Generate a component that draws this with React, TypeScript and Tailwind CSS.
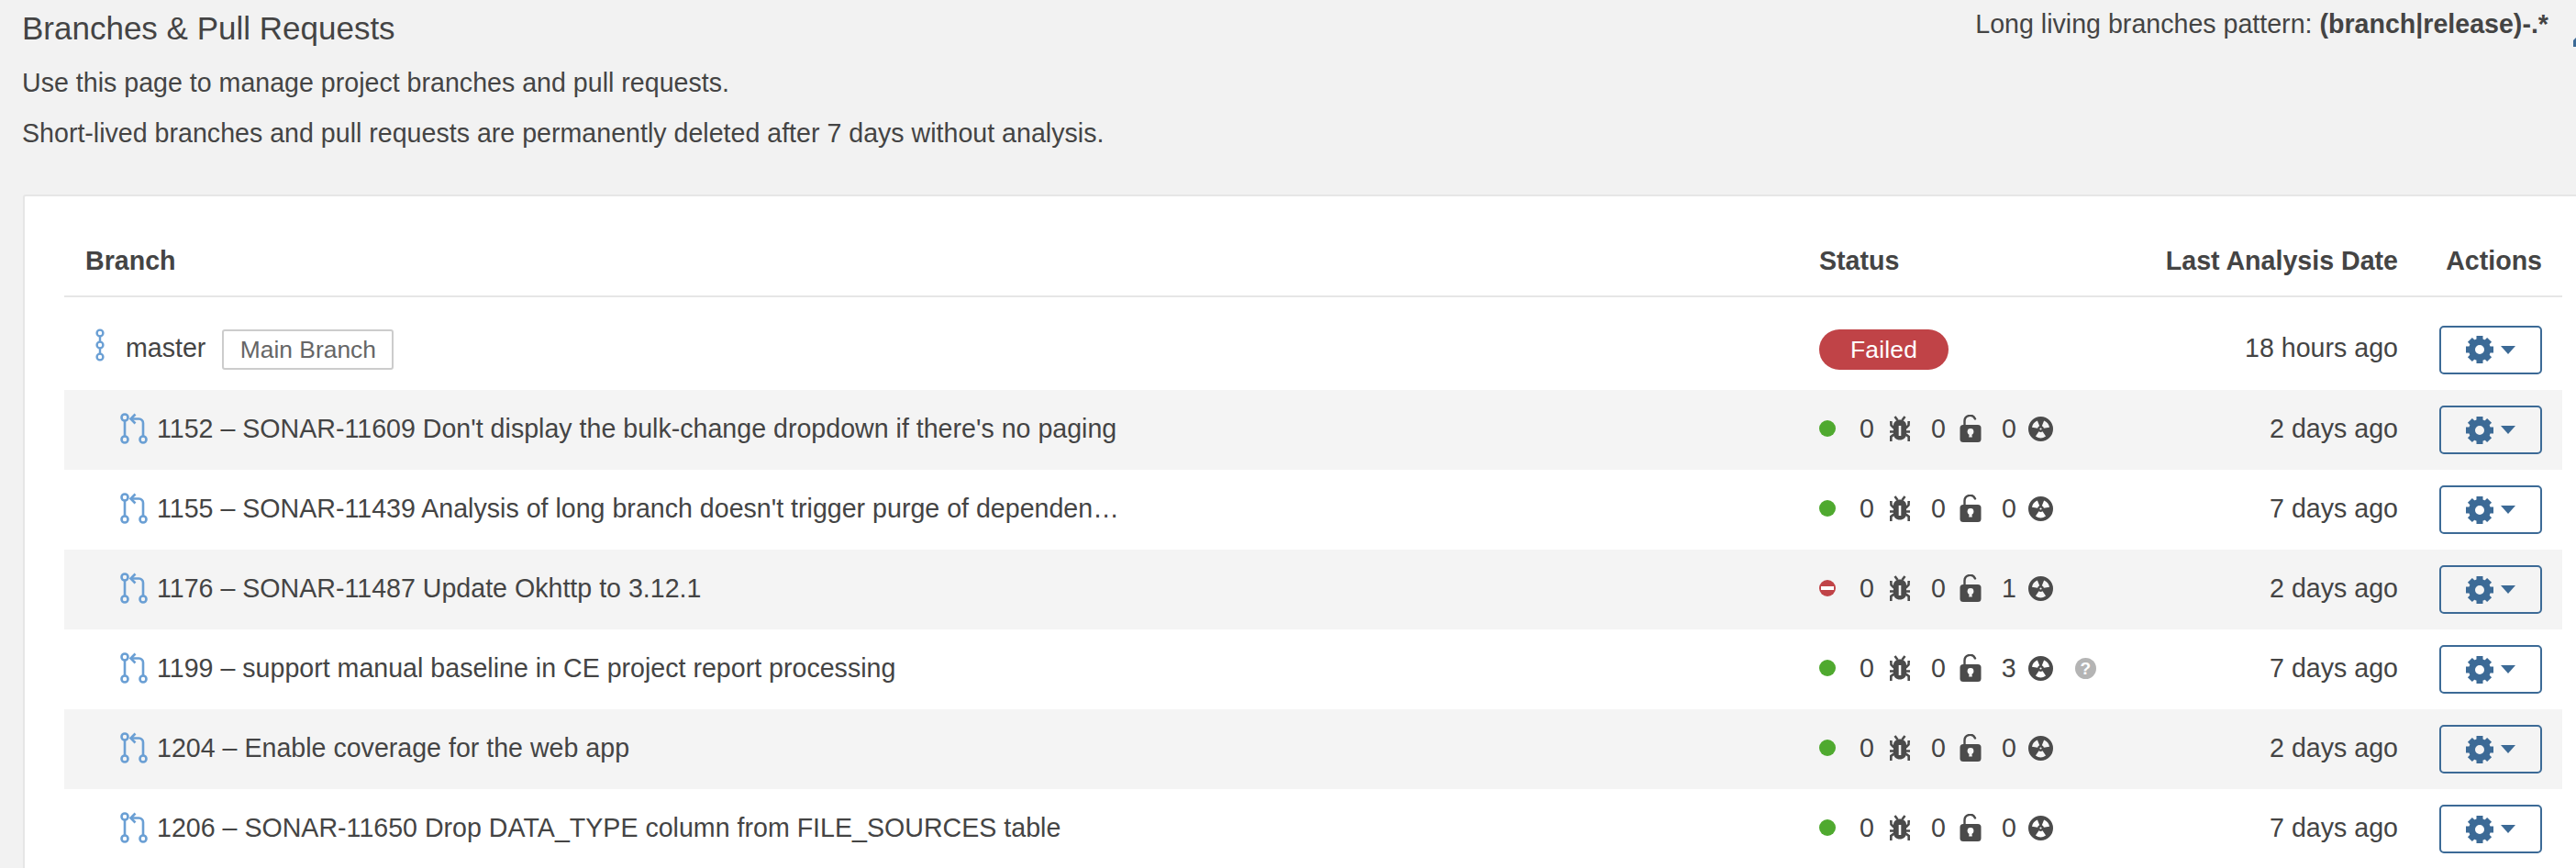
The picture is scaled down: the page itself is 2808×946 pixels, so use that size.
const BranchIcon = () => (
  <svg width="10" height="36" viewBox="0 0 10 36" fill="none" stroke="#6a9fd4" strokeWidth="2.4" className="shrink-0 mb-[10px]">
    <circle cx="5" cy="5" r="3.4" />
    <circle cx="5" cy="18" r="3.4" />
    <circle cx="5" cy="31" r="3.4" />
    <path d="M5 8.500v6M5 21.500v6" />
  </svg>
);

const PrIcon = () => (
  <svg width="30" height="34" viewBox="0 0 30 34" fill="none" stroke="#6a9fd4" strokeWidth="2.6" className="shrink-0">
    <circle cx="5" cy="5" r="3.500" />
    <circle cx="5" cy="29" r="3.500" />
    <circle cx="25" cy="29" r="3.500" />
    <path d="M5 8.500v17M25 25.500V11a4.500 4.500 0 0 0-4.500-4.500H12" />
    <path d="M16.500 1.500L11.500 6.500l5 5" />
  </svg>
);

const BugIcon = ({ hole }: { hole: string }) => (
  <svg width="22" height="28" viewBox="0 0 22 28" fill="#4b4b4b" className="shrink-0">
    <path d="M7 5.500C8 4 14 4 15 5.500C17.500 7 18 9 18 11L18 20C18 24 15 26.500 11 26.500C7 26.500 4 24 4 20L4 11C4 9 4.500 7 7 5.500Z" />
    <rect x="9.700" y="11" width="2.600" height="11" fill={hole} />
    <path d="M5.500 1l3 4M16.500 1l-3 4M1.300 6l.2 4.500 3 3M20.700 6l-.2 4.500-3 3M0 17.500H4.500M22 17.500H17.500M1.300 28v-5l3.200-2.500M20.700 28v-5l-3.200-2.500" fill="none" stroke="#4b4b4b" strokeWidth="2.600" />
  </svg>
);

const LockIcon = ({ hole }: { hole: string }) => (
  <svg width="24" height="31" viewBox="0 0 24 31" className="shrink-0">
    <path d="M5.500 12V7a6 6 0 0 1 11.500-2.500" fill="none" stroke="#4b4b4b" strokeWidth="2.400" strokeLinecap="round" />
    <rect x="0.500" y="11" width="23" height="19" rx="3.500" fill="#4b4b4b" />
    <circle cx="12" cy="18.500" r="3.400" fill={hole} />
    <path d="M10.800 20h2.400l.6 4.500h-3.600Z" fill={hole} />
  </svg>
);

const RadIcon = () => (
  <svg width="27" height="27" viewBox="0 0 27 27" className="shrink-0">
    <path
      fill="#4b4b4b"
      fillRule="evenodd"
      d="M13.500 0a13.500 13.500 0 1 0 0 27a13.500 13.500 0 1 0 0-27Z
         M16.940 12.830L23.020 11.650A9.700 9.700 0 0 0 17.130 4.510L14.810 10.250A3.500 3.500 0 0 1 16.940 12.830Z
         M10.060 12.830L3.980 11.650A9.700 9.700 0 0 1 9.870 4.510L12.190 10.250A3.500 3.500 0 0 0 10.060 12.830Z
         M11.490 16.370L7.940 21.450A9.700 9.700 0 0 0 19.060 21.450L15.510 16.370A3.500 3.500 0 0 1 11.490 16.370Z
         M13.500 12.400a1.100 1.100 0 1 0 0 2.200a1.100 1.100 0 1 0 0-2.200Z"
    />
  </svg>
);

const GearIcon = () => (
  <svg width="30" height="30" viewBox="0 0 30 30" fill="#3c6a96" className="shrink-0">
    <circle cx="15" cy="15" r="8.500" fill="none" stroke="#3c6a96" strokeWidth="7" />
    {[0, 45, 90, 135, 180, 225, 270, 315].map((a) => (
      <rect key={a} x="11.500" y="0" width="7" height="7" transform={`rotate(${a} 15 15)`} />
    ))}
  </svg>
);

const QuestionIcon = () => (
  <span className="ml-[24px] w-[23px] h-[23px] rounded-full bg-[#b4b4b4] text-white text-[19px] leading-[23px] font-bold text-center shrink-0">?</span>
);

const rows = [
  { t: "1152 – SONAR-11609 Don't display the bulk-change dropdown if there's no paging", ok: true, c: 0, d: "2 days ago" },
  { t: "1155 – SONAR-11439 Analysis of long branch doesn't trigger purge of dependen…", ok: true, c: 0, d: "7 days ago" },
  { t: "1176 – SONAR-11487 Update Okhttp to 3.12.1", ok: false, c: 1, d: "2 days ago" },
  { t: "1199 – support manual baseline in CE project report processing", ok: true, c: 3, d: "7 days ago", q: true },
  { t: "1204 – Enable coverage for the web app", ok: true, c: 0, d: "2 days ago" },
  { t: "1206 – SONAR-11650 Drop DATA_TYPE column from FILE_SOURCES table", ok: true, c: 0, d: "7 days ago" },
];

const ActionButton = () => (
  <div className="w-[112px] h-[53px] border-2 border-[#3c6a96] rounded-[5px] flex items-center justify-center gap-[8px]">
    <GearIcon />
    <span className="w-0 h-0 border-l-[8px] border-r-[8px] border-t-[9px] border-l-transparent border-r-transparent border-t-[#3c6a96]" />
  </div>
);

export default function App() {
  return (
    <div
      className="w-[2808px] h-[946px] overflow-hidden bg-[#f2f2f2] text-[#444444] text-[28.6px] leading-[36px]"
      style={{ fontFamily: '"Liberation Sans", Arial, sans-serif' }}
    >
      <div className="h-[212px] pl-[24px] pt-[11px] flex justify-between">
        <div>
          <h1 className="text-[35px] leading-[40px] font-normal">Branches &amp; Pull Requests</h1>
          <p className="mt-[21px]">Use this page to manage project branches and pull requests.</p>
          <p className="mt-[19px]">Short-lived branches and pull requests are permanently deleted after 7 days without analysis.</p>
        </div>
        <div className="flex items-start gap-[27px] -mt-[3px]">
          <span>
            Long living branches pattern: <b>(branch|release)-.*</b>
          </span>
          <svg width="24" height="24" viewBox="0 0 24 24" fill="#3c6a96" className="shrink-0 mt-[23px] -mr-[21px]">
            <path d="M0 20v-7L10 3l7 7L7 20Z" />
          </svg>
        </div>
      </div>
      <div className="ml-[25px] w-[2800px] h-[760px] bg-white border-2 border-[#e6e6e6] rounded-[3px] pl-[43px]">
        <div className="w-[2723px]">
          <div className="h-[110px] flex items-end pb-[20px] border-b-2 border-[#e6e6e6] font-bold">
            <div className="w-[1913px] pl-[23px]">Branch</div>
            <div className="w-[296px]">Status</div>
            <div className="w-[335px] text-right">Last Analysis Date</div>
            <div className="w-[157px] text-right">Actions</div>
          </div>
          <div className="h-[101px] pt-[13px] flex items-center">
            <div className="w-[1913px] pl-[34px] flex items-center">
              <BranchIcon />
              <span className="ml-[23px] mb-[5px]">master</span>
              <span className="ml-[18px] w-[187px] h-[44px] border-2 border-[#cccccc] rounded-[3px] text-[#666666] text-[26.4px] flex items-center justify-center">
                Main Branch
              </span>
            </div>
            <div className="w-[296px]">
              <span className="w-[141px] h-[44px] rounded-full bg-[#c04347] text-white text-[26.4px] tracking-[0.2px] flex items-center justify-center">
                Failed
              </span>
            </div>
            <div className="w-[335px] text-right mb-[4px]">18 hours ago</div>
            <div className="w-[157px] flex justify-end">
              <ActionButton />
            </div>
          </div>
          {rows.map((r, i) => {
            const hole = i % 2 === 0 ? "#f4f4f4" : "#ffffff";
            return (
              <div key={r.t} className={`h-[87px] flex items-center ${i % 2 === 0 ? "bg-[#f4f4f4]" : "bg-white"}`}>
                <div className="w-[1913px] pl-[61px] flex items-center pb-[3px]">
                  <PrIcon />
                  <span className="ml-[10px]">{r.t}</span>
                </div>
                <div className="w-[296px] flex items-center pb-[3px]">
                  {r.ok ? (
                    <span className="w-[18px] h-[18px] rounded-full bg-[#4fa92f] shrink-0" />
                  ) : (
                    <span className="w-[18px] h-[18px] rounded-full bg-[#c04347] shrink-0 flex items-center justify-center">
                      <span className="w-[14px] h-[4px] bg-white" />
                    </span>
                  )}
                  <span className="ml-[26px] w-[16px]">0</span>
                  <span className="ml-[17px] flex"><BugIcon hole={hole} /></span>
                  <span className="ml-[23px] w-[16px]">0</span>
                  <span className="ml-[15px] flex"><LockIcon hole={hole} /></span>
                  <span className="ml-[22px] w-[16px]">{r.c}</span>
                  <span className="ml-[13px] flex"><RadIcon /></span>
                  {r.q && <QuestionIcon />}
                </div>
                <div className="w-[335px] text-right pb-[3px]">{r.d}</div>
                <div className="w-[157px] flex justify-end">
                  <ActionButton />
                </div>
              </div>
            );
          })}
        </div>
      </div>
    </div>
  );
}
